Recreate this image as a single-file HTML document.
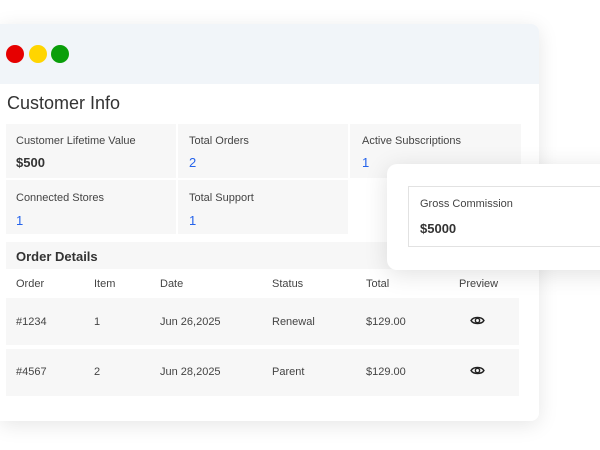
<!DOCTYPE html>
<html><head><style>
body{margin:0;width:600px;height:450px;background:#fff;font-family:"Liberation Sans",sans-serif;position:relative;overflow:hidden;color:#333}
.card{position:absolute;left:0;top:24px;width:539px;height:397px;background:#fff;border-radius:0 8px 8px 0;box-shadow:0 4px 20px rgba(0,0,0,.10);overflow:hidden}
.hdr{height:60px;background:#f1f5f9;position:relative}
.dot{position:absolute;top:21px;width:18px;height:18px;border-radius:50%}
.t{position:absolute;font-size:11px;color:#444}
.v{position:absolute;font-size:13px;color:#2563eb}
.cell{position:absolute;background:#f7f7f7}
.pop{position:absolute;left:387px;top:164px;width:240px;height:106px;background:#fff;border-radius:10px;box-shadow:0 4px 24px rgba(0,0,0,.12)}
.eye{position:absolute;width:15px;height:11px}
</style></head><body>
<div class="card">
<div class="hdr">
<div class="dot" style="left:6px;background:#e60000"></div>
<div class="dot" style="left:29px;background:#ffd500"></div>
<div class="dot" style="left:51px;background:#0a9e0a"></div>
</div>
<div style="position:absolute;left:7px;top:69px;font-size:18px;color:#333">Customer Info</div>
<div class="cell" style="left:6px;top:100px;width:170px;height:54px"></div>
<div class="cell" style="left:178px;top:100px;width:170px;height:54px"></div>
<div class="cell" style="left:350px;top:100px;width:171px;height:54px"></div>
<div class="cell" style="left:6px;top:156px;width:170px;height:54px"></div>
<div class="cell" style="left:178px;top:156px;width:170px;height:54px"></div>
<div class="t" style="left:16px;top:111px">Customer Lifetime Value</div>
<div class="v" style="left:16px;top:131px;color:#333;font-weight:bold">$500</div>
<div class="t" style="left:189px;top:111px">Total Orders</div>
<div class="v" style="left:189px;top:131px">2</div>
<div class="t" style="left:362px;top:111px">Active Subscriptions</div>
<div class="v" style="left:362px;top:131px">1</div>
<div class="t" style="left:16px;top:168px">Connected Stores</div>
<div class="v" style="left:16px;top:189px">1</div>
<div class="t" style="left:189px;top:168px">Total Support</div>
<div class="v" style="left:189px;top:189px">1</div>
<div class="cell" style="left:6px;top:218px;width:515px;height:27px"></div>
<div style="position:absolute;left:16px;top:225px;font-size:13px;font-weight:bold;color:#333">Order Details</div>
<div class="t" style="left:16px;top:254px">Order</div>
<div class="t" style="left:94px;top:254px">Item</div>
<div class="t" style="left:160px;top:254px">Date</div>
<div class="t" style="left:272px;top:254px">Status</div>
<div class="t" style="left:366px;top:254px">Total</div>
<div class="t" style="left:459px;top:254px">Preview</div>
<div class="cell" style="left:6px;top:274px;width:513px;height:47px"></div>
<div class="cell" style="left:6px;top:325px;width:513px;height:47px"></div>
<div class="t" style="left:16px;top:292px">#1234</div>
<div class="t" style="left:94px;top:292px">1</div>
<div class="t" style="left:160px;top:292px">Jun 26,2025</div>
<div class="t" style="left:272px;top:292px">Renewal</div>
<div class="t" style="left:366px;top:292px">$129.00</div>
<div class="t" style="left:16px;top:342px">#4567</div>
<div class="t" style="left:94px;top:342px">2</div>
<div class="t" style="left:160px;top:342px">Jun 28,2025</div>
<div class="t" style="left:272px;top:342px">Parent</div>
<div class="t" style="left:366px;top:342px">$129.00</div>
<svg class="eye" style="left:470px;top:291px" viewBox="0 0 14 10"><path d="M1 5C3 1.3 11 1.3 13 5C11 8.7 3 8.7 1 5Z" fill="none" stroke="#222" stroke-width="1.4"/><circle cx="7" cy="5" r="2" fill="none" stroke="#222" stroke-width="1.3"/></svg>
<svg class="eye" style="left:470px;top:341px" viewBox="0 0 14 10"><path d="M1 5C3 1.3 11 1.3 13 5C11 8.7 3 8.7 1 5Z" fill="none" stroke="#222" stroke-width="1.4"/><circle cx="7" cy="5" r="2" fill="none" stroke="#222" stroke-width="1.3"/></svg>
</div>
<div class="pop">
<div style="position:absolute;left:21px;top:22px;width:240px;height:59px;border:1px solid #e2e2e2"></div>
<div class="t" style="left:33px;top:34px">Gross Commission</div>
<div style="position:absolute;left:33px;top:57px;font-size:13px;color:#333;font-weight:bold">$5000</div>
</div>
</body></html>
